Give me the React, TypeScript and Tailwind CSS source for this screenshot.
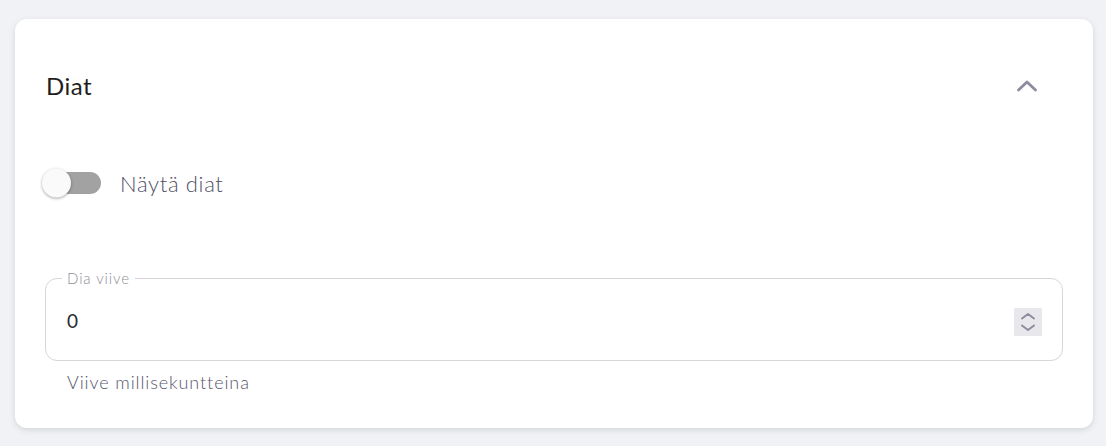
export default function App() {
  return (
    <div
      className="h-[446px] w-[1106px] bg-[#f1f2f5] pl-[15px] pr-[13px] pt-[19px]"
      style={{ fontFamily: "Lato, 'Noto Sans', sans-serif" }}
    >
      <div className="h-[409px] rounded-xl bg-white px-[30px] shadow-[0_2px_6px_rgba(0,0,0,0.12)]">
        {/* header */}
        <div className="flex h-[134px] items-center justify-between">
          <h2 className="pl-px text-[24px] font-normal tracking-[0.02em] text-[#1e1e1e]">Diat</h2>
          <button className="mr-[20px] flex h-8 w-8 items-center justify-center text-[#8c8c9e]">
            <svg width="24" height="16" viewBox="0 0 24 16" fill="none" stroke="currentColor" strokeWidth="2.8" strokeLinecap="round" strokeLinejoin="round">
              <polyline points="3.5,12 12,4 20.5,12" />
            </svg>
          </button>
        </div>

        {/* toggle */}
        <div className="flex h-[60px] items-center gap-[19px]">
          <div className="relative ml-[-1px] h-[22px] w-[57px] rounded-full bg-[#a2a2a2]">
            <div className="absolute left-[-2px] top-1/2 h-[29px] w-[29px] -translate-y-1/2 rounded-full bg-[#fafafa] shadow-[0_1px_3px_rgba(0,0,0,0.35)]" />
          </div>
          <span className="text-[22px] font-light tracking-[0.03em] text-[#4f4f64]">Näytä diat</span>
        </div>

        {/* number field */}
        <fieldset className="mt-[56px] h-[92px] rounded-xl border border-[#d6d6da] pl-[16px] pr-[20px]">
          <legend className="px-[5px] text-[15px] font-light leading-[18px] tracking-[0.06em] text-[#8e8e98]">Dia viive</legend>
          <div className="flex h-[74px] items-center justify-between pb-[5px]">
            <span className="pl-[5px] text-[19px] font-normal text-[#2a2a2a]">0</span>
            <div className="h-[28px] w-[28px] bg-[#e7e7ec] text-[#8c8c9e]">
              <svg width="28" height="28" viewBox="0 0 28 28" fill="none" stroke="currentColor" strokeWidth="2" strokeLinecap="round" strokeLinejoin="round">
                <polyline points="8,10.5 14,6 20,10.5" />
                <polyline points="8,17.5 14,22 20,17.5" />
              </svg>
            </div>
          </div>
        </fieldset>
        <p className="mt-[8px] pl-[22px] text-[18px] font-light tracking-[0.05em] text-[#55556a]">Viive millisekuntteina</p>
      </div>
    </div>
  );
}
